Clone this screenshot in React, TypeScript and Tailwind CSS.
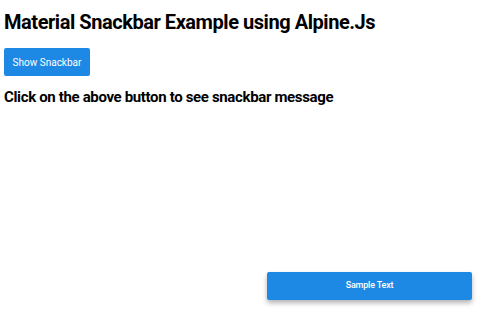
import React from "react";

export default function App() {
  return (
    <div className="relative w-[500px] h-[318px] bg-white overflow-hidden" style={{ fontFamily: "Roboto, 'Liberation Sans', sans-serif" }}>
      <div className="px-1 pt-2 flex flex-col items-start">
        <h1 className="text-[20px] leading-[28px] font-bold tracking-[-0.45px] text-black">Material Snackbar Example using Alpine.Js</h1>
        <button className="mt-3 h-[28px] w-[86px] rounded-[2px] bg-[#1e88e5] text-white text-[10px] flex items-center justify-center">
          Show Snackbar
        </button>
        <p className="mt-[9px] text-[15px] leading-[24px] font-bold tracking-[-0.35px] text-black">Click on the above button to see snackbar message</p>
      </div>
      <div className="absolute right-[28px] bottom-[18px] w-[205px] h-[28px] rounded-[2px] bg-[#1e88e5] text-white text-[9px] font-medium tracking-[-0.2px] flex items-center justify-center shadow-[0_3px_5px_rgba(0,0,0,0.3)]">
        Sample Text
      </div>
    </div>
  );
}
